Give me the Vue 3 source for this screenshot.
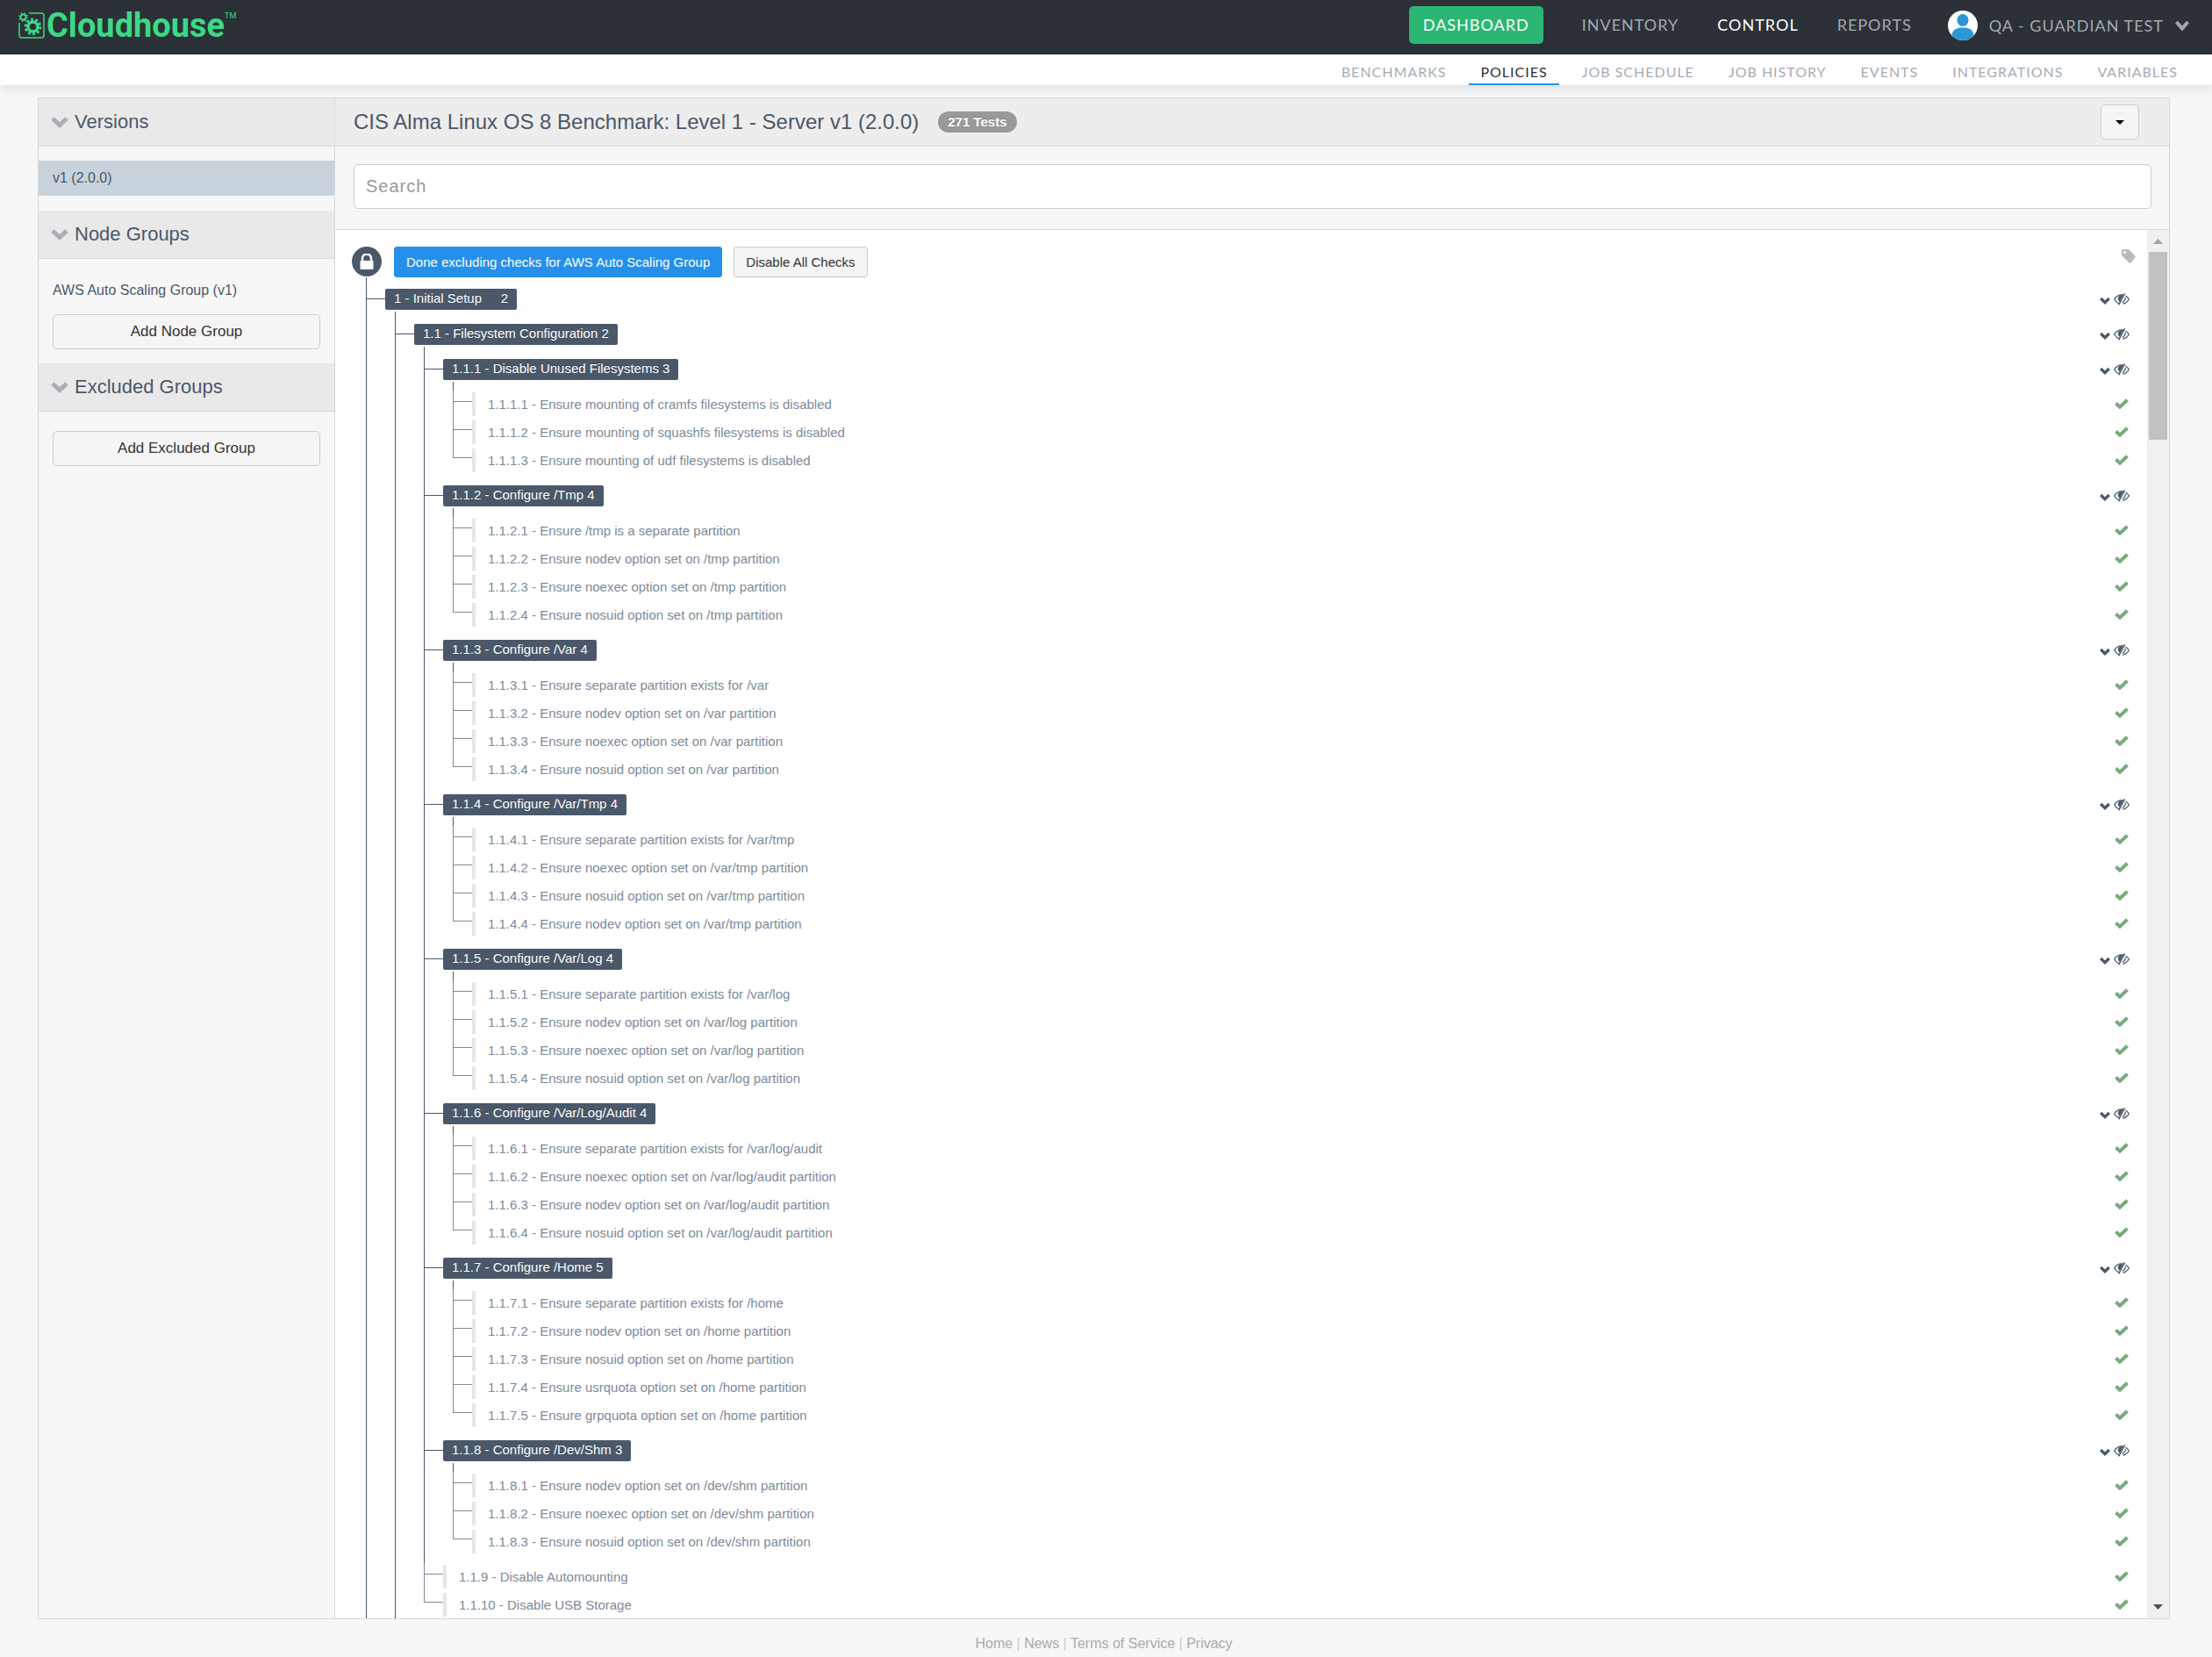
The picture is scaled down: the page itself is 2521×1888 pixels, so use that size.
<template>
  <div class="page">
    <header class="topbar">
      <a class="logo" href="#" aria-label="Cloudhouse">
        <svg class="logo-mark" viewBox="0 0 30 30" aria-hidden="true">
          <path
            d="M12 1H26.500a2.500 2.500 0 0 1 2.500 2.500V26.500a2.500 2.500 0 0 1-2.500 2.500H3.500A2.500 2.500 0 0 1 1 26.500V12"
            fill="none"
            stroke="#3dd984"
            stroke-width="1.500"
          />
          <circle cx="16.500" cy="16.500" r="5.500" fill="none" stroke="#3dd984" stroke-width="3.400" />
          <circle
            cx="16.500"
            cy="16.500"
            r="8.300"
            fill="none"
            stroke="#3dd984"
            stroke-width="3"
            stroke-dasharray="2.900 2.315"
          />
          <circle cx="5.500" cy="5.500" r="3" fill="none" stroke="#3dd984" stroke-width="1.800" />
          <circle
            cx="5.500"
            cy="5.500"
            r="4.500"
            fill="none"
            stroke="#3dd984"
            stroke-width="1.800"
            stroke-dasharray="1.600 1.934"
          />
        </svg>
        <span class="logo-name">Cloudhouse</span>
        <span class="logo-tm">TM</span>
      </a>
      <nav class="main-nav">
        <a class="dashboard" href="#">DASHBOARD</a>
        <a href="#">INVENTORY</a>
        <a href="#" class="active">CONTROL</a>
        <a href="#">REPORTS</a>
      </nav>
      <button class="account" type="button">
        <svg class="avatar" viewBox="0 0 34 34" aria-hidden="true">
          <circle cx="17" cy="17" r="17" fill="#fff" />
          <ellipse cx="17" cy="11" rx="6.500" ry="7" fill="#2d96d8" />
          <path d="M4.500 28.500C5 22 9.500 19.500 17 19.500s12 2.500 12.500 9A17 17 0 0 1 4.500 28.500z" fill="#2d96d8" />
        </svg>
        QA - GUARDIAN TEST
        <svg class="account-arrow" viewBox="0 0 16 12" aria-hidden="true">
          <path d="M1.500 2L8 9.500 14.500 2" />
        </svg>
      </button>
    </header>

    <nav class="sub-nav">
      <a v-for="item in subNav" :key="item" href="#" :class="{ active: item === 'POLICIES' }">{{ item }}</a>
    </nav>

    <main class="panel">
      <aside class="sidebar">
        <section>
          <h2>
            <svg viewBox="0 0 20 14" aria-hidden="true"><path d="M2 3l8 7.500L18 3" /></svg>
            Versions
          </h2>
          <a class="version" href="#">v1 (2.0.0)</a>
        </section>
        <section>
          <h2>
            <svg viewBox="0 0 20 14" aria-hidden="true"><path d="M2 3l8 7.500L18 3" /></svg>
            Node Groups
          </h2>
          <div class="group-body">
            <a class="group-link" href="#">AWS Auto Scaling Group (v1)</a>
            <button type="button">Add Node Group</button>
          </div>
        </section>
        <section>
          <h2>
            <svg viewBox="0 0 20 14" aria-hidden="true"><path d="M2 3l8 7.500L18 3" /></svg>
            Excluded Groups
          </h2>
          <div class="group-body">
            <button type="button">Add Excluded Group</button>
          </div>
        </section>
      </aside>

      <section class="content">
        <div class="content-head">
          <h1>CIS Alma Linux OS 8 Benchmark: Level 1 - Server v1 (2.0.0)</h1>
          <span class="badge">271 Tests</span>
          <button class="more" type="button" aria-label="More actions">
            <svg viewBox="0 0 10 5" aria-hidden="true"><path d="M0 0h10L5 5z" /></svg>
          </button>
        </div>

        <div class="search">
          <input v-model="search" type="text" placeholder="Search" aria-label="Search" />
        </div>

        <div class="tree-wrap">
          <div class="tree">
            <div class="tree-actions">
              <span class="lock">
                <svg viewBox="0 0 16 18" aria-hidden="true">
                  <path d="M3 8V5.500a5 5 0 0 1 10 0V8" fill="none" stroke="#fff" stroke-width="2.500" />
                  <rect x="0.500" y="8" width="15" height="10" rx="1" fill="#fff" />
                </svg>
              </span>
              <button class="primary" type="button">Done excluding checks for AWS Auto Scaling Group</button>
              <button type="button">Disable All Checks</button>
              <svg class="tag" viewBox="0 0 16 16" aria-hidden="true">
                <path
                  d="M1.500 0H7q.8 0 1.400.6l7 7q.8.900 0 1.800L10.400 15.400q-.9.800-1.800 0l-7.900-7.600Q0 7.200 0 6.400V1.500Q0 0 1.500 0zM3.500 2a1.500 1.500 0 1 0 .01 0z"
                  fill-rule="evenodd"
                />
              </svg>
            </div>

            <ul class="branch">
              <li class="group">
                <span class="twig"></span>
                <div class="node">
                  <div class="row">
                    <span class="label wide"><span>1 - Initial Setup</span><span>2</span></span>
                    <RowToggle />
                  </div>
                  <ul class="branch">
                    <li class="group">
                      <span class="twig"></span>
                      <div class="node">
                        <div class="row">
                          <span class="label">1.1 - Filesystem Configuration 2</span>
                          <RowToggle />
                        </div>
                        <ul class="branch">
                          <li v-for="group in groups" :key="group.name" class="group">
                            <span class="twig"></span>
                            <div class="node">
                              <div class="row">
                                <span class="label">{{ group.name }} {{ group.checks.length }}</span>
                                <RowToggle />
                              </div>
                              <ul class="branch">
                                <li v-for="check in group.checks" :key="check" class="leaf">
                                  <span class="twig"></span>
                                  <a class="check" href="#">{{ check }}</a>
                                  <CheckMark />
                                </li>
                              </ul>
                            </div>
                          </li>
                          <li v-for="check in looseChecks" :key="check" class="leaf">
                            <span class="twig"></span>
                            <a class="check" href="#">{{ check }}</a>
                            <CheckMark />
                          </li>
                        </ul>
                      </div>
                    </li>
                  </ul>
                </div>
              </li>
            </ul>
          </div>

          <div class="scrollbar" aria-hidden="true">
            <svg viewBox="0 0 25 25"><path d="M7 16h11l-5.500-6z" fill="#a3a3a3" /></svg>
            <div class="thumb"></div>
            <svg class="down" viewBox="0 0 25 25"><path d="M7 9h11l-5.500 6z" fill="#505050" /></svg>
          </div>
        </div>
      </section>
    </main>

    <footer class="footer">
      <a href="#">Home</a> | <a href="#">News</a> | <a href="#">Terms of Service</a> | <a href="#">Privacy</a>
    </footer>
  </div>
</template>

<script setup>
import { h, ref } from 'vue'

const search = ref('')

const subNav = ['BENCHMARKS', 'POLICIES', 'JOB SCHEDULE', 'JOB HISTORY', 'EVENTS', 'INTEGRATIONS', 'VARIABLES']

const groups = [
  {
    name: '1.1.1 - Disable Unused Filesystems',
    checks: [
      '1.1.1.1 - Ensure mounting of cramfs filesystems is disabled',
      '1.1.1.2 - Ensure mounting of squashfs filesystems is disabled',
      '1.1.1.3 - Ensure mounting of udf filesystems is disabled',
    ],
  },
  {
    name: '1.1.2 - Configure /Tmp',
    checks: [
      '1.1.2.1 - Ensure /tmp is a separate partition',
      '1.1.2.2 - Ensure nodev option set on /tmp partition',
      '1.1.2.3 - Ensure noexec option set on /tmp partition',
      '1.1.2.4 - Ensure nosuid option set on /tmp partition',
    ],
  },
  {
    name: '1.1.3 - Configure /Var',
    checks: [
      '1.1.3.1 - Ensure separate partition exists for /var',
      '1.1.3.2 - Ensure nodev option set on /var partition',
      '1.1.3.3 - Ensure noexec option set on /var partition',
      '1.1.3.4 - Ensure nosuid option set on /var partition',
    ],
  },
  {
    name: '1.1.4 - Configure /Var/Tmp',
    checks: [
      '1.1.4.1 - Ensure separate partition exists for /var/tmp',
      '1.1.4.2 - Ensure noexec option set on /var/tmp partition',
      '1.1.4.3 - Ensure nosuid option set on /var/tmp partition',
      '1.1.4.4 - Ensure nodev option set on /var/tmp partition',
    ],
  },
  {
    name: '1.1.5 - Configure /Var/Log',
    checks: [
      '1.1.5.1 - Ensure separate partition exists for /var/log',
      '1.1.5.2 - Ensure nodev option set on /var/log partition',
      '1.1.5.3 - Ensure noexec option set on /var/log partition',
      '1.1.5.4 - Ensure nosuid option set on /var/log partition',
    ],
  },
  {
    name: '1.1.6 - Configure /Var/Log/Audit',
    checks: [
      '1.1.6.1 - Ensure separate partition exists for /var/log/audit',
      '1.1.6.2 - Ensure noexec option set on /var/log/audit partition',
      '1.1.6.3 - Ensure nodev option set on /var/log/audit partition',
      '1.1.6.4 - Ensure nosuid option set on /var/log/audit partition',
    ],
  },
  {
    name: '1.1.7 - Configure /Home',
    checks: [
      '1.1.7.1 - Ensure separate partition exists for /home',
      '1.1.7.2 - Ensure nodev option set on /home partition',
      '1.1.7.3 - Ensure nosuid option set on /home partition',
      '1.1.7.4 - Ensure usrquota option set on /home partition',
      '1.1.7.5 - Ensure grpquota option set on /home partition',
    ],
  },
  {
    name: '1.1.8 - Configure /Dev/Shm',
    checks: [
      '1.1.8.1 - Ensure nodev option set on /dev/shm partition',
      '1.1.8.2 - Ensure noexec option set on /dev/shm partition',
      '1.1.8.3 - Ensure nosuid option set on /dev/shm partition',
    ],
  },
]

const looseChecks = ['1.1.9 - Disable Automounting', '1.1.10 - Disable USB Storage']

// chevron and crossed-out eye at the end of every group row
const RowToggle = () =>
  h('span', { class: 'row-toggle' }, [
    h('button', { type: 'button', 'aria-label': 'Collapse' }, [
      h('svg', { class: 'chevron', viewBox: '0 0 12 9' }, [
        h('path', { d: 'M1.200 2L6 6.700 10.800 2', fill: 'none', stroke: '#4a586a', 'stroke-width': 3.2 }),
      ]),
    ]),
    h('button', { type: 'button', 'aria-label': 'Exclude' }, [
      h('svg', { class: 'eye', viewBox: '0 0 18 14' }, [
        h('path', {
          d: 'M6.400 11.900C4 11.200 2.100 9.400.7 7 2.700 3.600 5.600 1.800 9 1.800q1 0 1.900.2M13.500 3q2.300 1.400 3.800 4-2.500 4.500-7 5.200',
          fill: 'none',
          stroke: '#4a586a',
          'stroke-width': 1.3,
        }),
        h('path', { d: 'M10.600 2.300A4.300 4.300 0 0 0 4.800 6.300q0 2 1.900 3.600z', fill: '#4a586a' }),
        h('path', { d: 'M12.600.4L5.700 13.400', stroke: '#4a586a', 'stroke-width': 1.4 }),
        h('path', { d: 'M13.300 4.800q.2 3.700-3.300 5.600', fill: 'none', stroke: '#4a586a', 'stroke-width': 1.2 }),
      ]),
    ]),
  ])

const CheckMark = () =>
  h('svg', { class: 'check-mark', viewBox: '0 0 16 12', 'aria-hidden': 'true' }, [
    h('path', { d: 'M1.500 5.500L6 9.700 14.500 1.700', fill: 'none', stroke: '#7aaa7c', 'stroke-width': 4 }),
  ])
</script>

<style>
body {
  background: #f7f7f7;
}
</style>

<style scoped>
.page {
  display: flex;
  flex-direction: column;
  height: 100vh;
  font-family: 'Liberation Sans', Arial, sans-serif;
  font-size: 15px;
  color: #4a586a;
}

.page :deep(*) {
  box-sizing: border-box;
}

a {
  color: inherit;
  text-decoration: none;
}

button {
  font-family: inherit;
  cursor: pointer;
}

h1,
h2 {
  margin: 0;
  font-weight: normal;
}

.topbar {
  display: flex;
  align-items: center;
  height: 62px;
  padding: 0 26px 4px 21px;
  background: #2c3138;
  border-bottom: 1px solid #26242b;
  font-family: Lato, sans-serif;
  font-size: 18px;
  letter-spacing: 1px;
  color: #a3a9b0;
}

.logo {
  display: flex;
  margin-right: auto;
  color: #3dd984;
  font-family: Roboto, sans-serif;
  letter-spacing: 0;
}

.logo-mark {
  width: 30px;
  height: 30px;
}

.logo-name {
  margin-left: 2px;
  font-size: 38px;
  font-weight: 700;
  line-height: 30px;
}

.logo-tm {
  font-size: 9px;
  line-height: 8px;
}

.main-nav {
  display: flex;
  align-items: center;
  gap: 44px;
}

.main-nav a {
  padding-bottom: 2px;
}

.main-nav .active {
  color: #fff;
}

.main-nav .dashboard {
  padding: 0 16px;
  border-radius: 5px;
  background: #2cb673;
  line-height: 43px;
  color: #fff;
}

.account {
  display: flex;
  align-items: center;
  gap: 13px;
  margin-left: 41px;
  padding: 0;
  border: 0;
  background: none;
  font-size: 18px;
  letter-spacing: 1px;
  color: #a3a9b0;
}

.avatar {
  width: 34px;
  height: 34px;
}

.account-arrow {
  width: 16px;
  height: 12px;
  fill: none;
  stroke: #a3a9b0;
  stroke-width: 4;
}

.sub-nav {
  position: relative;
  display: flex;
  justify-content: flex-end;
  gap: 13px;
  height: 35px;
  padding-right: 26px;
  background: #fff;
  box-shadow: 0 2px 14px rgba(0, 0, 0, 0.12);
  font-family: Lato, sans-serif;
  font-size: 16px;
  line-height: 39px;
  letter-spacing: 1px;
  color: #a6adb5;
}

.sub-nav a {
  height: 35px;
  padding: 0 13px;
}

.sub-nav .active {
  border-bottom: 2px solid #2490eb;
  color: #2c3138;
}

.panel {
  display: flex;
  flex: 1;
  min-height: 0;
  margin: 14px 48px 0 43px;
  border: 1px solid #d6d8da;
}

.sidebar {
  width: 338px;
  border-right: 1px solid #d6d8da;
}

.sidebar h2 {
  display: flex;
  align-items: center;
  gap: 7px;
  height: 55px;
  padding-left: 14px;
  background: #e9e9e9;
  border-bottom: 1px solid #d6d8da;
  font-size: 22px;
}

.sidebar h2 svg {
  width: 20px;
  height: 14px;
  fill: none;
  stroke: #a8afb7;
  stroke-width: 5;
}

.version {
  display: block;
  margin: 16px 0 17px;
  padding-left: 16px;
  background: #c8d2da;
  font-size: 16px;
  line-height: 40px;
}

.group-body {
  padding: 22px 16px 16px;
}

.group-link {
  display: block;
  margin-bottom: 13px;
  font-size: 16px;
  line-height: 28px;
}

.group-body button {
  display: block;
  width: 100%;
  height: 40px;
  padding: 0;
  border: 1px solid #ccc;
  border-radius: 5px;
  background: #f5f5f5;
  font-size: 17px;
  color: #333;
}

.content {
  display: flex;
  flex: 1;
  flex-direction: column;
  min-width: 0;
}

.content-head {
  display: flex;
  align-items: center;
  height: 55px;
  padding: 0 34px 0 21px;
  background: #ededed;
  border-bottom: 1px solid #d6d8da;
}

.content-head h1 {
  font-size: 24px;
}

.badge {
  margin-left: 22px;
  padding: 0 11px;
  border-radius: 12px;
  background: #999;
  font-size: 15px;
  font-weight: bold;
  line-height: 24px;
  color: #fff;
  text-shadow: 0 -1px 0 rgba(0, 0, 0, 0.25);
}

.more {
  width: 44px;
  height: 40px;
  margin-left: auto;
  padding: 0 0 4px;
  border: 1px solid #ccc;
  border-radius: 5px;
  background: #f5f5f5;
}

.more svg {
  width: 10px;
  height: 5px;
}

.search {
  padding: 20px 20px 23px 21px;
  border-bottom: 1px solid #d6d8da;
}

.search input {
  display: block;
  width: 100%;
  height: 51px;
  padding: 0 13px;
  border: 1px solid #ccc;
  border-radius: 5px;
  background: #fff;
  font-family: inherit;
  font-size: 20px;
  letter-spacing: 1px;
  color: #4a586a;
}

.search input::placeholder {
  color: #999;
}

.tree-wrap {
  display: flex;
  flex: 1;
  min-height: 0;
  background: #fff;
}

.tree {
  flex: 1;
  padding: 19px 20px 0 19px;
  overflow: hidden;
}

.tree-actions {
  display: flex;
  gap: 13px;
}

.tree-actions button {
  height: 35px;
  padding: 0 13px;
  border: 1px solid #ccc;
  border-radius: 3px;
  background: #f5f5f5;
  font-size: 15px;
  color: #333;
}

.tree-actions .primary {
  border-color: #2490eb;
  background: #2490eb;
  color: #fff;
}

.lock {
  display: flex;
  align-items: center;
  justify-content: center;
  width: 34px;
  height: 34px;
  margin-right: 1px;
  border-radius: 50%;
  background: #4a586a;
}

.lock svg {
  width: 16px;
  height: 18px;
}

.tag {
  width: 16px;
  height: 16px;
  margin: 3px -7px 0 auto;
  fill: #b4bbc4;
}

.branch {
  margin: 0 0 0 11px;
  padding: 0;
  list-style: none;
}

.branch::before {
  display: block;
  height: 10px;
  margin-top: 2px;
  border-left: 1px solid #4a586a;
  content: '';
}

.tree > .branch {
  margin-left: 16px;
}

.tree > .branch::before {
  height: 9px;
  margin-top: 0;
}

.group,
.leaf {
  display: flex;
  border-left: 1px solid #4a586a;
}

.group {
  padding: 4px 0 8px;
}

.leaf {
  height: 32px;
  border-color: #7d8a99;
  color: #7d8a99;
}

.twig {
  width: 21px;
  height: 12px;
  border-bottom: 1px solid #4a586a;
}

.leaf .twig {
  height: 13px;
  border-color: #7d8a99;
}

/* the line of a branch stops at the hook of its last check */
.leaf:last-child {
  border-left: 0;
}

.leaf:last-child .twig {
  width: 22px;
  border-left: 1px solid #7d8a99;
}

.node {
  flex: 1;
}

.row {
  display: flex;
  align-items: center;
  justify-content: space-between;
  height: 24px;
}

.label {
  padding: 0 10px 2px;
  border-radius: 2px;
  background: #4a586a;
  line-height: 22px;
  color: #fff;
  text-shadow: 0 -1px 0 rgba(0, 0, 0, 0.25);
}

.label.wide {
  display: flex;
  justify-content: space-between;
  width: 150px;
}

.row :deep(.row-toggle) {
  display: flex;
  align-items: center;
  gap: 4px;
}

.row :deep(button) {
  display: flex;
  padding: 0;
  border: 0;
  background: none;
}

.row :deep(.chevron) {
  width: 12px;
  height: 9px;
  margin-top: 3px;
}

.row :deep(.eye) {
  width: 18px;
  height: 14px;
}

.check {
  height: 27px;
  margin: 2px auto 0 0;
  padding-left: 14px;
  border-left: 4px solid #e6e6e6;
  line-height: 27px;
}

.leaf :deep(.check-mark) {
  width: 16px;
  height: 12px;
  margin: 9px 1px 0 0;
}

.scrollbar {
  display: flex;
  flex-direction: column;
  width: 25px;
  background: #f0f0f0;
}

.scrollbar svg {
  width: 25px;
  height: 25px;
}

.thumb {
  height: 214px;
  margin: 0 2px;
  background: #c1c1c1;
}

.scrollbar .down {
  margin-top: auto;
}

.footer {
  padding: 17px 5px 4px 0;
  font-size: 16px;
  line-height: 22px;
  text-align: center;
  color: #ccc;
}

.footer a {
  color: #aaa;
}
</style>
